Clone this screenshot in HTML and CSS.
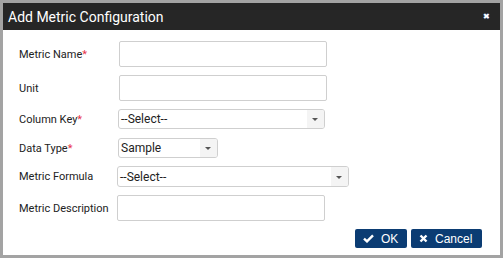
FILE: index.html
```html
<!DOCTYPE html>
<html lang="en">
<head>
    <meta charset="UTF-8">
    <title>Add Metric Configuration</title>
    <link rel="stylesheet" href="styles.css">
</head>
<body>
    <div class="dialog">
        <div class="title-bar">
            <span class="title">Add Metric Configuration</span>
            <span class="close">&#10006;</span>
        </div>
        <form class="body">
            <div class="row r-name">
                <label>Metric Name<span class="req">*</span></label>
                <input type="text" class="field f-name">
            </div>
            <div class="row r-unit">
                <label>Unit</label>
                <input type="text" class="field f-unit">
            </div>
            <div class="row r-key">
                <label>Column Key<span class="req">*</span></label>
                <div class="select f-key"><span>--Select--</span><i class="arrow"></i></div>
            </div>
            <div class="row r-type">
                <label>Data Type<span class="req">*</span></label>
                <div class="select f-type"><span>Sample</span><i class="arrow"></i></div>
            </div>
            <div class="row r-formula">
                <label>Metric Formula</label>
                <div class="select f-formula"><span>--Select--</span><i class="arrow"></i></div>
            </div>
            <div class="row r-desc">
                <label>Metric Description</label>
                <input type="text" class="field f-desc">
            </div>
            <div class="actions">
                <button type="button" class="btn btn-ok">
                    <svg width="11" height="9" viewBox="0 0 11 9"><path d="M1 4.6 L4 7.4 L10 1.4" fill="none" stroke="#fff" stroke-width="2.4"/></svg>
                    OK
                </button>
                <button type="button" class="btn btn-cancel">
                    <svg width="9" height="9" viewBox="0 0 9 9"><path d="M1.5 1.5 L7.5 7.5 M7.5 1.5 L1.5 7.5" fill="none" stroke="#fff" stroke-width="2.4"/></svg>
                    Cancel
                </button>
            </div>
        </form>
    </div>
</body>
</html>
```

FILE: styles.css
```css
html, body {
    margin: 0;
    padding: 0;
}
body {
    width: 503px;
    height: 258px;
    background: #a3a3a3;
    font-family: Roboto, 'Liberation Sans', sans-serif;
}
.dialog {
    margin: 3px 3px 0 3px;
    height: 252px;
    background: #fff;
    display: flex;
    flex-direction: column;
}
.title-bar {
    height: 27px;
    background: #262626;
    color: #fff;
    display: flex;
    align-items: center;
    justify-content: space-between;
    padding: 0 10px 0 5px;
}
.title {
    font-size: 14px;
}
.close {
    font-size: 8px;
    color: #fff;
    text-shadow: 0 0 1px #6aa0ff;
}
.body {
    padding: 11px 0 0 16px;
    display: flex;
    flex-direction: column;
    gap: 8px;
}
.row {
    display: flex;
    align-items: center;
}
label {
    width: 99px;
    font-size: 11px;
    color: #222;
}
.req {
    color: #e8334a;
}
.field {
    box-sizing: border-box;
    height: 26px;
    border: 1px solid #cfcfcf;
    border-radius: 2px;
    margin: 0;
    padding: 0 4px;
}
.f-name, .f-unit {
    width: 208px;
    margin-left: 1px;
}
.f-desc {
    width: 208px;
    margin-left: -1px;
}
.select {
    box-sizing: border-box;
    display: flex;
    align-items: center;
    justify-content: space-between;
    border: 1px solid #cfcfcf;
    border-radius: 3px;
    font-size: 12px;
    color: #222;
    padding-left: 2px;
    overflow: hidden;
}
.select .arrow {
    align-self: stretch;
    width: 17px;
    background: #f4f4f4;
    position: relative;
}
.select .arrow::after {
    content: '';
    position: absolute;
    left: 5px;
    top: 50%;
    margin-top: -1px;
    border-left: 3px solid transparent;
    border-right: 3px solid transparent;
    border-top: 3px solid #555;
}
.f-key {
    width: 207px;
    height: 20px;
}
.r-type {
    margin-top: 1px;
}
.f-type {
    width: 100px;
    height: 20px;
}
.f-formula {
    width: 232px;
    height: 21px;
    margin-left: -1px;
}
.actions {
    display: flex;
    justify-content: flex-end;
    gap: 4px;
    padding-right: 18px;
}
.btn {
    height: 19px;
    background: #0b3c73;
    color: #fff;
    border: none;
    border-radius: 2px;
    font-family: 'Liberation Sans', Arial, sans-serif;
    font-size: 12px;
    display: flex;
    align-items: center;
    gap: 7px;
    padding: 0 8px;
    cursor: pointer;
}
.btn-ok {
    width: 52px;
}
.btn-cancel {
    width: 71px;
}
```
